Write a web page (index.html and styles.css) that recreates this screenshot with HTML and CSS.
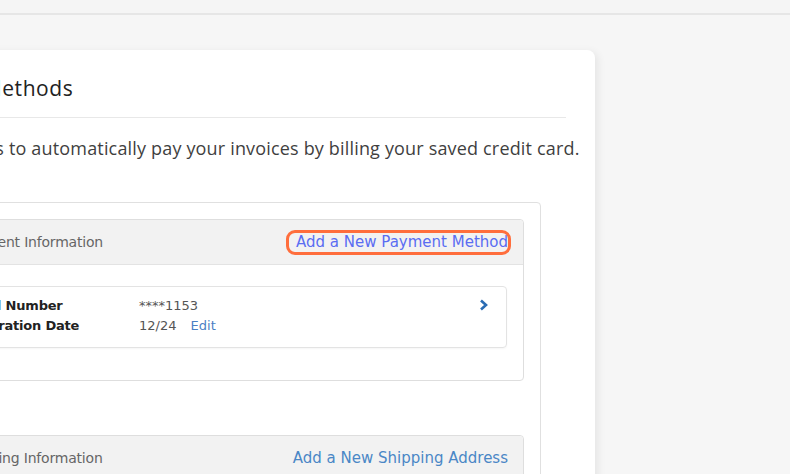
FILE: index.html
```html
<!DOCTYPE html>
<html lang="en">
<head>
    <meta charset="UTF-8">
    <meta name="viewport" content="width=device-width, initial-scale=1.0">
    <title>Payment Methods</title>
    <link rel="stylesheet" href="styles.css">
</head>
<body>
    <div class="topbar"></div>

    <div class="main">
        <div class="card">
            <h2 class="card-title">Payment Methods</h2>
            <p class="card-text">Enable AutoPay to allow us to automatically pay your invoices by billing your saved credit card.</p>

            <div class="box">
                <!-- Payment panel -->
                <div class="panel">
                    <div class="panel-head">
                        <span class="panel-name">Payment Information</span>
                        <a href="#" class="panel-link highlight">Add a New Payment Method</a>
                    </div>
                    <div class="panel-body">
                        <div class="pay-row">
                            <div class="pay-grid">
                                <span class="pay-label">Card Number</span>
                                <span class="pay-value">****1153</span>
                                <span class="pay-label">Expiration Date</span>
                                <span class="pay-value">12/24 <a href="#" class="edit">Edit</a></span>
                            </div>
                            <svg class="chevron" width="10" height="12" viewBox="0 0 10 12">
                                <path d="M2 1.5 L7 6 L2 10.5" fill="none" stroke="#2b6cb3" stroke-width="2.6" stroke-linejoin="miter"/>
                            </svg>
                        </div>
                    </div>
                </div>

                <!-- Shipping panel -->
                <div class="panel shipping">
                    <div class="panel-head">
                        <span class="panel-name">Shipping Information</span>
                        <a href="#" class="panel-link">Add a New Shipping Address</a>
                    </div>
                    <div class="panel-body">
                        <div class="pay-row">
                            <div class="pay-grid">
                                <span class="pay-label">Address</span>
                                <span class="pay-value">-</span>
                            </div>
                        </div>
                    </div>
                </div>
            </div>
        </div>
    </div>
</body>
</html>
```

FILE: styles.css
```css
body {
    margin: 0;
    background-color: #f6f6f6;
    font-family: "DejaVu Sans", sans-serif;
    overflow: hidden;
}
a {
    text-decoration: none;
}
.topbar {
    height: 13px;
    background-color: #f5f5f5;
    border-bottom: 2px solid #e6e6e6;
}
.main {
    padding-top: 35px;
}
.card {
    box-sizing: border-box;
    width: 734px;
    height: 600px;
    margin-left: -139px;
    padding: 24px 29px 0 0;
    background-color: #fff;
    border-radius: 8px;
    box-shadow: 3px 2px 8px rgba(0,0,0,0.07);
}
.card-title {
    font-family: "Open Sans", sans-serif;
    font-size: 21px;
    letter-spacing: 0.6px;
    font-weight: 500;
    line-height: 28px;
    color: #222;
    margin: 0 0 0 25px;
    padding-bottom: 15px;
    border-bottom: 1px solid #e8e8e8;
}
.card-text {
    font-family: "Open Sans", sans-serif;
    font-size: 18px;
    letter-spacing: 0.17px;
    line-height: 26px;
    color: #3f3f3f;
    margin: 17px 0 0 -87px;
    white-space: nowrap;
}
.box {
    margin: 41px 25px 0 60px;
    border: 1px solid #e0e0e0;
    border-radius: 4px;
    padding: 16px;
    height: 400px;
}
.panel {
    border: 1px solid #dedede;
    border-radius: 4px;
}
.panel-head {
    display: flex;
    justify-content: space-between;
    align-items: center;
    height: 44px;
    padding: 0 15px 0 21px;
    background-color: #f2f2f2;
    border-bottom: 1px solid #e3e3e3;
    border-radius: 4px 4px 0 0;
}
.panel-name {
    font-size: 14px;
    letter-spacing: -0.2px;
    color: #666;
}
.panel-link {
    font-size: 15px;
    line-height: 19px;
    color: #4a87c6;
}
.panel-link.highlight {
    color: #5a6df2;
    padding-left: 7px;
    outline: 3px solid #ff6e3d;
    border-radius: 6px;
}
.panel-body {
    padding: 21px 16px 32px 16px;
}
.pay-row {
    display: flex;
    justify-content: space-between;
    align-items: flex-start;
    border: 1px solid #e3e3e3;
    border-radius: 4px;
    padding: 9px 17px 11px 12px;
    box-shadow: 0 1px 2px rgba(0,0,0,0.04);
}
.pay-grid {
    display: grid;
    grid-template-columns: 171px auto;
    line-height: 20px;
    font-size: 13px;
}
.pay-label {
    font-weight: bold;
    letter-spacing: -0.2px;
    color: #222;
}
.pay-value {
    color: #555;
}
.edit {
    color: #4a7fc4;
    margin-left: 10px;
}
.chevron {
    margin-top: 3px;
}
.shipping {
    margin-top: 54px;
}
```
